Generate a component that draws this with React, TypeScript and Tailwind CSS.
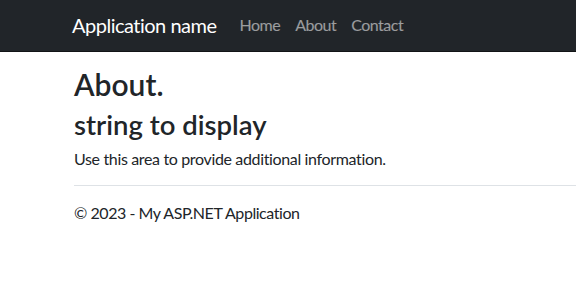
export default function App() {
  return (
    <div className="min-h-[308px] bg-white text-[#212529]" style={{ fontFamily: 'Lato, sans-serif' }}>
      <nav className="h-[52px] bg-[#212529] border-b border-[#121416]">
        <div className="flex items-center h-full pl-[72px] pb-[2px]">
          <span className="text-[20px] leading-[24px] text-white tracking-[-0.5px] mr-[23px]">Application name</span>
          <div className="flex gap-[15px] text-[16px] leading-[24px] tracking-[-0.5px] text-white/55">
            <span>Home</span>
            <span>About</span>
            <span>Contact</span>
          </div>
        </div>
      </nav>
      <main className="pl-[74px] pt-[14px]">
        <h2 className="text-[30px] font-semibold leading-[36px]">About.</h2>
        <h3 className="text-[27.5px] font-semibold leading-[33px] mt-[6px]">string to display</h3>
        <p className="text-[16px] leading-[24px] tracking-[-0.35px] mt-[6px]">Use this area to provide additional information.</p>
        <hr className="mt-[14px] border-t border-[#dee2e6]" />
        <footer className="text-[16px] leading-[24px] tracking-[-0.45px] mt-[15px]">© 2023 - My ASP.NET Application</footer>
      </main>
    </div>
  );
}
